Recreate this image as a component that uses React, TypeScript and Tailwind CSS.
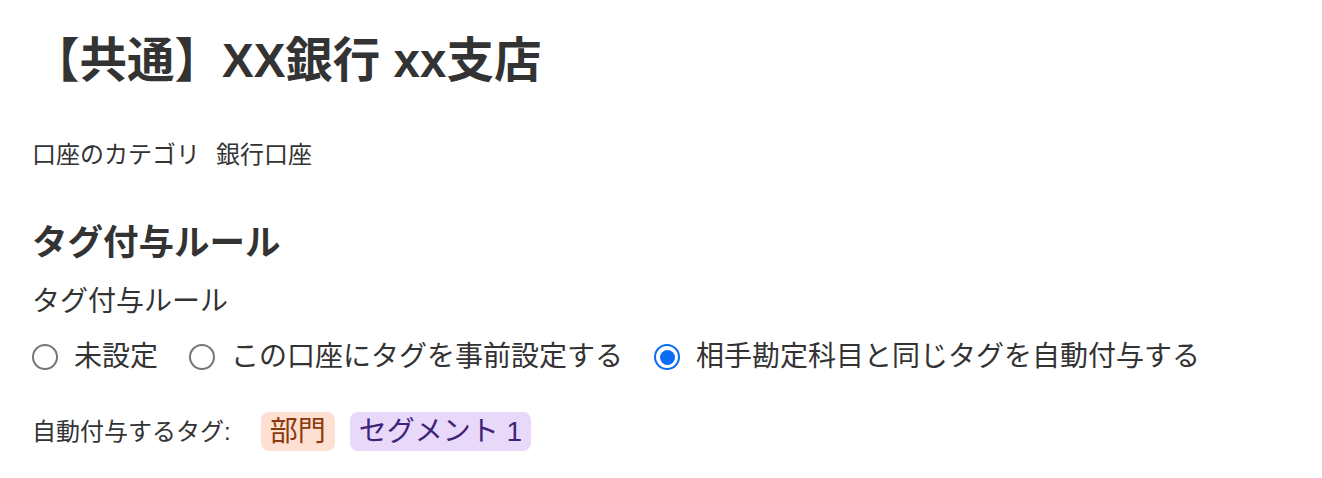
const font = "font-['Liberation_Sans','Noto_Sans_CJK_JP',sans-serif]"

type RadioProps = {
  label: string
  checked?: boolean
}

function Radio({ label, checked }: RadioProps) {
  return (
    <label className="flex items-center gap-4">
      {checked ? (
        <span className="flex h-[26px] w-[26px] items-center justify-center rounded-full border-2 border-[#0b6cf5] bg-white">
          <span className="h-[15px] w-[15px] rounded-full bg-[#0b6cf5]" />
        </span>
      ) : (
        <span className="h-[26px] w-[26px] rounded-full border-2 border-[#767676] bg-white" />
      )}
      <span className="text-[28px] leading-[40px]">{label}</span>
    </label>
  )
}

export default function App() {
  return (
    <div className={`${font} min-h-[478px] w-full bg-white px-8 pt-8 text-[#333333]`}>
      {/* Account header */}
      <h1 className="text-[47.5px] font-bold leading-[58px]">【共通】XX銀行 xx支店</h1>

      <div className="mt-[49px] flex items-center gap-4 text-[24px] leading-[32px]">
        <span>口座のカテゴリ</span>
        <span>銀行口座</span>
      </div>

      {/* Tag rules */}
      <h2 className="mt-[50px] text-[35.5px] font-bold leading-[44px]">タグ付与ルール</h2>
      <div className="mt-[17px] text-[28px] leading-[40px]">タグ付与ルール</div>

      <div className="mt-[15px] flex items-center gap-[31px]">
        <Radio label="未設定" />
        <Radio label="この口座にタグを事前設定する" />
        <Radio label="相手勘定科目と同じタグを自動付与する" checked />
      </div>

      <div className="mt-[35px] flex items-center">
        <span className="mr-[30px] text-[24px] leading-[32px]">自動付与するタグ:</span>
        <div className="flex items-center gap-[15px]">
          <span className="rounded-lg bg-[#fde0d2] px-[9px] text-[28px] leading-[39px] text-[#8b3a0e]">部門</span>
          <span className="rounded-lg bg-[#e8d9fa] px-[9px] text-[28px] leading-[39px] text-[#3f2378]">セグメント 1</span>
        </div>
      </div>
    </div>
  )
}
